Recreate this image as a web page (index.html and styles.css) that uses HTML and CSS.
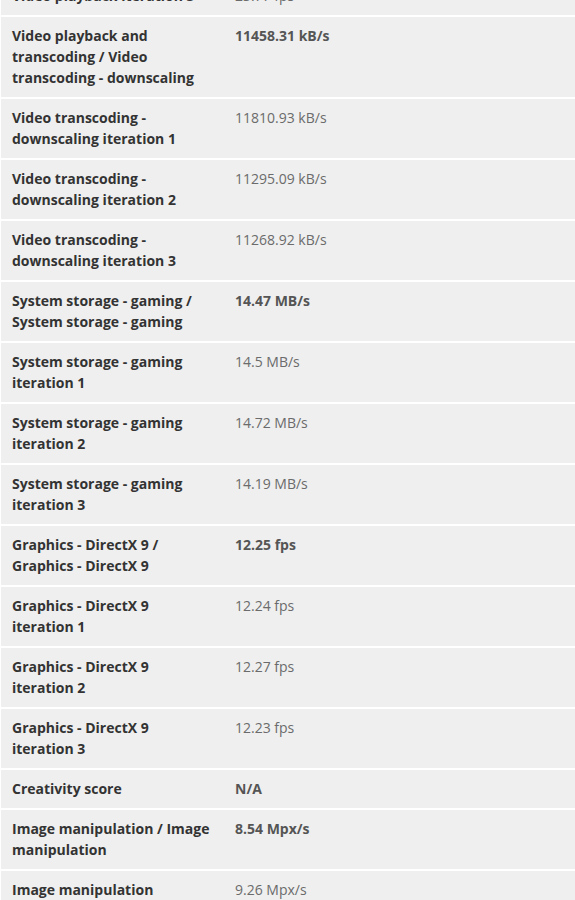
FILE: index.html
```html
<!DOCTYPE html>
<html>
<head>
<meta charset="utf-8">
<link rel="stylesheet" href="styles.css">
</head>
<body>
<div class="results">
  <div class="row"><div class="label">Video playback iteration 3</div><div class="value">23.77 fps</div></div>
  <div class="row"><div class="label">Video playback and transcoding / Video transcoding - downscaling</div><div class="value strong">11458.31 kB/s</div></div>
  <div class="row"><div class="label">Video transcoding - downscaling iteration 1</div><div class="value">11810.93 kB/s</div></div>
  <div class="row"><div class="label">Video transcoding - downscaling iteration 2</div><div class="value">11295.09 kB/s</div></div>
  <div class="row"><div class="label">Video transcoding - downscaling iteration 3</div><div class="value">11268.92 kB/s</div></div>
  <div class="row"><div class="label">System storage - gaming / System storage - gaming</div><div class="value strong">14.47 MB/s</div></div>
  <div class="row"><div class="label">System storage - gaming iteration 1</div><div class="value">14.5 MB/s</div></div>
  <div class="row"><div class="label">System storage - gaming iteration 2</div><div class="value">14.72 MB/s</div></div>
  <div class="row"><div class="label">System storage - gaming iteration 3</div><div class="value">14.19 MB/s</div></div>
  <div class="row"><div class="label">Graphics - DirectX 9 / Graphics - DirectX 9</div><div class="value strong">12.25 fps</div></div>
  <div class="row"><div class="label">Graphics - DirectX 9 iteration 1</div><div class="value">12.24 fps</div></div>
  <div class="row"><div class="label">Graphics - DirectX 9 iteration 2</div><div class="value">12.27 fps</div></div>
  <div class="row"><div class="label">Graphics - DirectX 9 iteration 3</div><div class="value">12.23 fps</div></div>
  <div class="row"><div class="label">Creativity score</div><div class="value strong">N/A</div></div>
  <div class="row"><div class="label">Image manipulation / Image manipulation</div><div class="value strong">8.54 Mpx/s</div></div>
  <div class="row"><div class="label">Image manipulation iteration 1</div><div class="value">9.26 Mpx/s</div></div>
</div>
</body>
</html>
```
FILE: styles.css
```css
html, body {
  margin: 0;
  padding: 0;
  background: #ffffff;
}
body {
  font-family: "Open Sans", "DejaVu Sans", sans-serif;
  font-size: 14px;
  line-height: 21px;
  overflow: hidden;
}
.results {
  margin-top: -23px;
  padding-left: 1px;
  display: flex;
  flex-direction: column;
  gap: 2px;
}
.row {
  display: grid;
  grid-template-columns: 222px 1fr;
  background: #efefef;
}
.label {
  padding: 8px 12px 9px 11px;
  font-weight: 700;
  color: #333333;
}
.value {
  padding: 8px 12px 9px 12px;
  color: #6b6b6b;
}
.value.strong {
  font-weight: 700;
  color: #555555;
}
```
